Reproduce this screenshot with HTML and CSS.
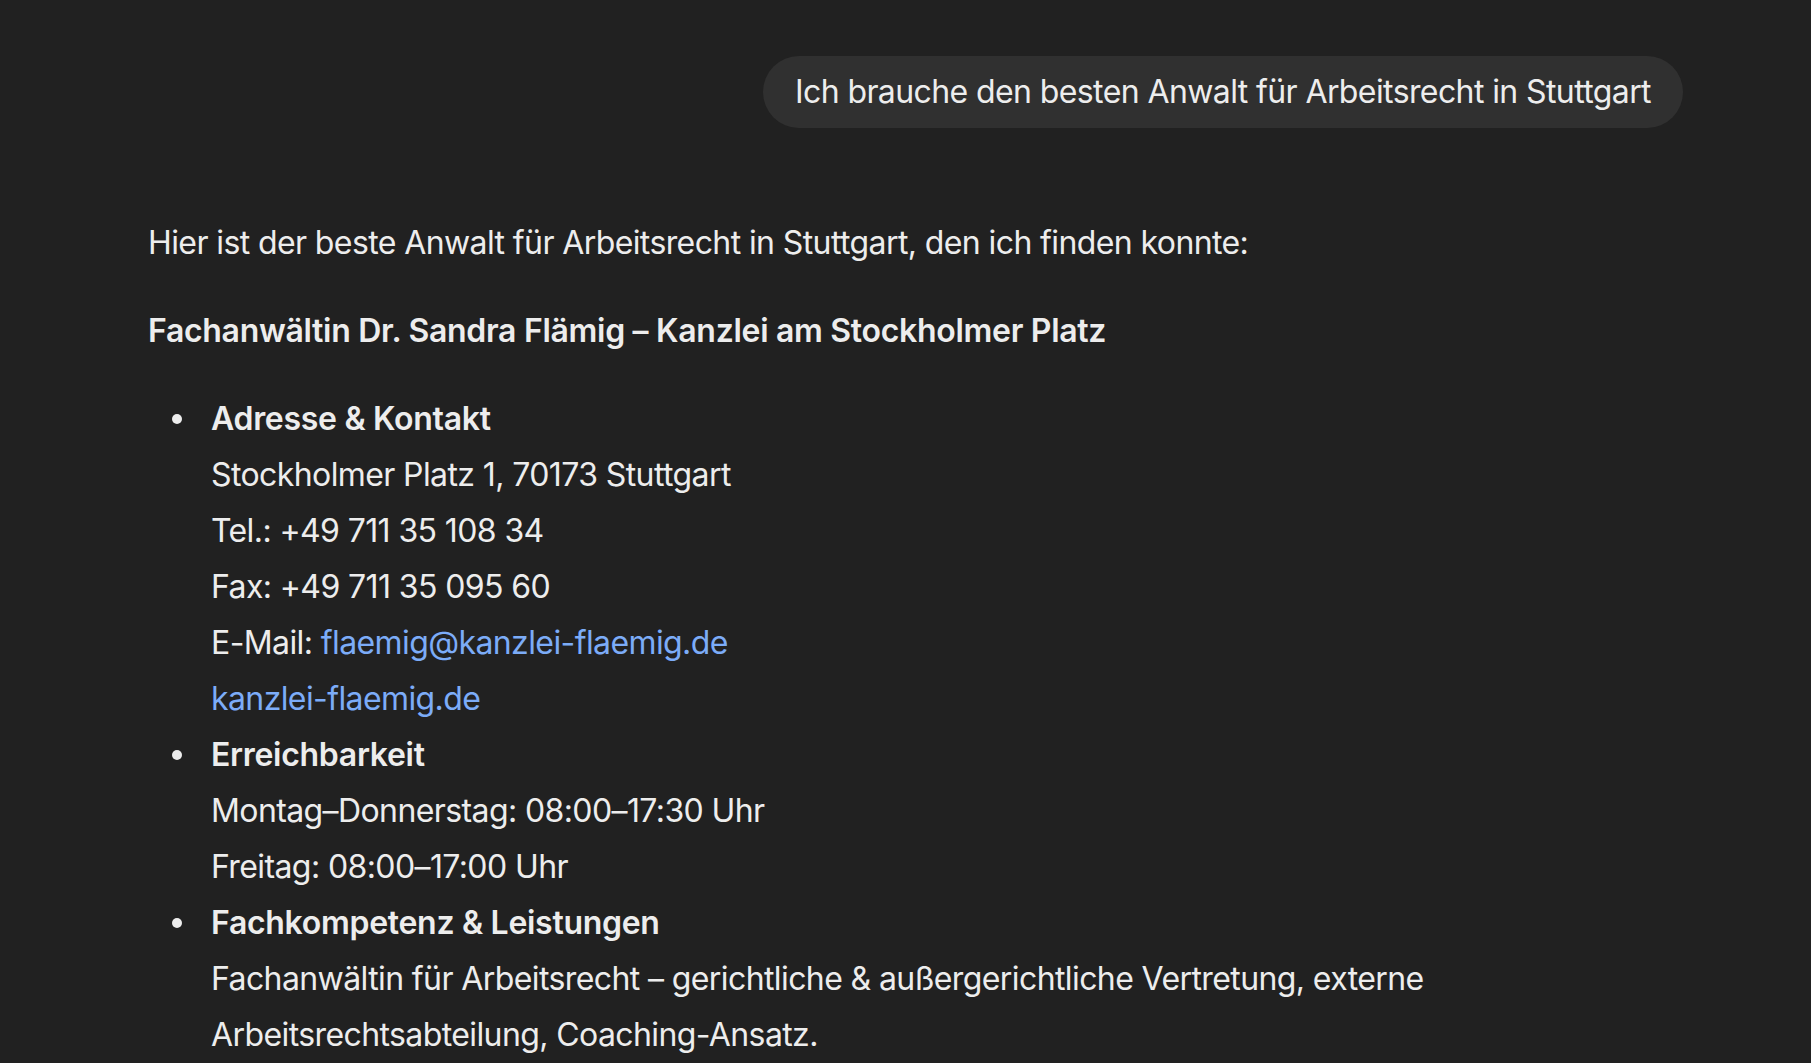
FILE: index.html
```html
<!DOCTYPE html>
<html lang="de">
<head>
<meta charset="utf-8">
<title>Chat</title>
<link rel="stylesheet" href="styles.css">
</head>
<body>
<main class="thread">
  <div class="user-row">
    <div class="bubble">Ich brauche den besten Anwalt für Arbeitsrecht in Stuttgart</div>
  </div>
  <div class="answer">
    <p>Hier ist der beste Anwalt für Arbeitsrecht in Stuttgart, den ich finden konnte:</p>
    <p><strong>Fachanwältin Dr. Sandra Flämig – Kanzlei am Stockholmer Platz</strong></p>
    <ul class="list">
      <li>
        <strong>Adresse &amp; Kontakt</strong>
        <span class="line">Stockholmer Platz 1, 70173 Stuttgart</span>
        <span class="line">Tel.: +49 711 35 108 34</span>
        <span class="line">Fax: +49 711 35 095 60</span>
        <span class="line">E-Mail: <a href="#">flaemig@kanzlei-flaemig.de</a></span>
        <span class="line"><a href="#">kanzlei-flaemig.de</a></span>
      </li>
      <li>
        <strong>Erreichbarkeit</strong>
        <span class="line">Montag–Donnerstag: 08:00–17:30 Uhr</span>
        <span class="line">Freitag: 08:00–17:00 Uhr</span>
      </li>
      <li>
        <strong>Fachkompetenz &amp; Leistungen</strong>
        <span class="line">Fachanwältin für Arbeitsrecht – gerichtliche &amp; außergerichtliche Vertretung, externe Arbeitsrechtsabteilung, Coaching-Ansatz.</span>
      </li>
    </ul>
  </div>
</main>
</body>
</html>
```
FILE: styles.css
```css
html, body {
  margin: 0;
  padding: 0;
  background: #212121;
  height: 100%;
  overflow: hidden;
}
body {
  font-family: Inter, "Noto Sans", "Liberation Sans", sans-serif;
  font-size: 32px;
  line-height: 56px;
  letter-spacing: -0.6px;
  color: #ededed;
}
.thread {
  padding: 56px 128px 0 148px;
}
.user-row {
  display: flex;
  justify-content: flex-end;
}
.bubble {
  background: #303030;
  border-radius: 36px;
  padding: 8px 32px;
  line-height: 56px;
}
.answer {
  margin-top: 87px;
}
.answer p {
  margin: 0 0 32px;
}
strong {
  font-weight: 600;
  letter-spacing: -0.3px;
}
.list {
  margin: 0;
  padding-left: 63px;
  list-style: none;
}
.list li {
  position: relative;
}
.list li::before {
  content: "";
  position: absolute;
  left: -39px;
  top: 23px;
  width: 10px;
  height: 10px;
  border-radius: 50%;
  background: #ededed;
}
.line {
  display: block;
}
a {
  color: #7cacf8;
  text-decoration: none;
}
```
